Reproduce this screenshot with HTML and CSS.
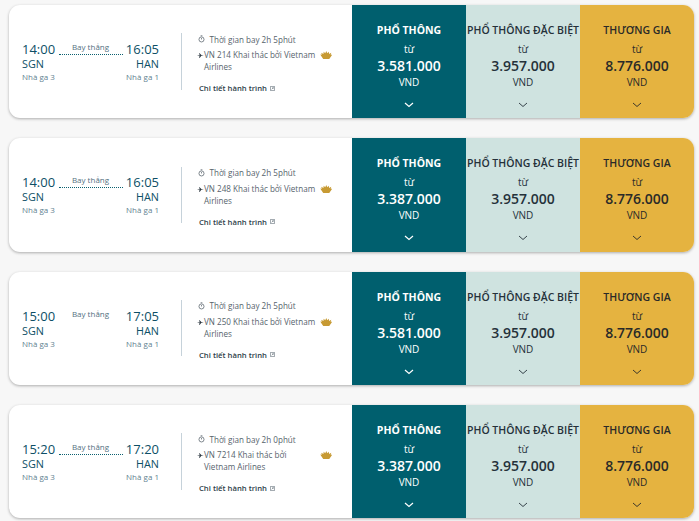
FILE: index.html
```html
<!DOCTYPE html>
<html lang="vi">
<head>
<meta charset="utf-8">
<title>Chuyến bay</title>
<link rel="stylesheet" href="styles.css">
</head>
<body>
<main class="list">
  <article class="card">
    <section class="route">
      <div class="ends">
        <span class="time">14:00</span>
        <div class="stop"><span>Bay thẳng</span></div>
        <span class="time">16:05</span>
      </div>
      <div class="codes"><span>SGN</span><span>HAN</span></div>
      <div class="terminals"><span>Nhà ga 3</span><span>Nhà ga 1</span></div>
    </section>
    <section class="info">
      <div class="duration"><svg class="clock" viewBox="0 0 8 9"><circle cx="4" cy="5" r="2.9"/><path d="M4 3.4V5M3 .8h2"/></svg><span>Thời gian bay 2h 5phút</span></div>
      <div class="carrier"><svg class="plane" viewBox="0 0 8 6"><path d="M0 2.4 1.2 3 3 3 2.2 5.600H3.200L5 3.200 8 2.800 5 2.400 3 .4H2.200L3 2.400 1.200 2.300z"/></svg><span class="carrier-name">VN 214 Khai thác bởi Vietnam Airlines</span><svg class="lotus" viewBox="0 0 12 8"><path d="M6 0 7 2.200 8.600 .8 8.800 3 11 1.800 10.400 3.800 12 3.600 10.400 6 9 8H3L1.600 6 0 3.600 1.600 3.800 1 1.800 3.200 3 3.400 .8 5 2.200z"/></svg></div>
      <div class="details"><span>Chi tiết hành trình</span><svg class="ext" viewBox="0 0 6 6"><path d="M.5.5h5v5h-5zM2 4l2-2M2.800 2H4v1.200"/></svg></div>
    </section>
    <section class="fare fare-eco"><h3>PHỔ THÔNG</h3><span class="from">từ</span><strong>3.581.000</strong><span class="cur">VND</span><svg class="chev" viewBox="0 0 10 6"><path d="M1 1l4 3.500L9 1"/></svg></section>
    <section class="fare fare-plus"><h3>PHỔ THÔNG ĐẶC BIỆT</h3><span class="from">từ</span><strong>3.957.000</strong><span class="cur">VND</span><svg class="chev" viewBox="0 0 10 6"><path d="M1 1l4 3.500L9 1"/></svg></section>
    <section class="fare fare-biz"><h3>THƯƠNG GIA</h3><span class="from">từ</span><strong>8.776.000</strong><span class="cur">VND</span><svg class="chev" viewBox="0 0 10 6"><path d="M1 1l4 3.500L9 1"/></svg></section>
  </article>
  <article class="card">
    <section class="route">
      <div class="ends">
        <span class="time">14:00</span>
        <div class="stop"><span>Bay thẳng</span></div>
        <span class="time">16:05</span>
      </div>
      <div class="codes"><span>SGN</span><span>HAN</span></div>
      <div class="terminals"><span>Nhà ga 3</span><span>Nhà ga 1</span></div>
    </section>
    <section class="info">
      <div class="duration"><svg class="clock" viewBox="0 0 8 9"><circle cx="4" cy="5" r="2.9"/><path d="M4 3.4V5M3 .8h2"/></svg><span>Thời gian bay 2h 5phút</span></div>
      <div class="carrier"><svg class="plane" viewBox="0 0 8 6"><path d="M0 2.4 1.2 3 3 3 2.2 5.600H3.200L5 3.200 8 2.800 5 2.400 3 .4H2.200L3 2.400 1.200 2.300z"/></svg><span class="carrier-name">VN 248 Khai thác bởi Vietnam Airlines</span><svg class="lotus" viewBox="0 0 12 8"><path d="M6 0 7 2.200 8.600 .8 8.800 3 11 1.800 10.400 3.800 12 3.600 10.400 6 9 8H3L1.600 6 0 3.600 1.600 3.800 1 1.800 3.200 3 3.400 .8 5 2.200z"/></svg></div>
      <div class="details"><span>Chi tiết hành trình</span><svg class="ext" viewBox="0 0 6 6"><path d="M.5.5h5v5h-5zM2 4l2-2M2.800 2H4v1.200"/></svg></div>
    </section>
    <section class="fare fare-eco"><h3>PHỔ THÔNG</h3><span class="from">từ</span><strong>3.387.000</strong><span class="cur">VND</span><svg class="chev" viewBox="0 0 10 6"><path d="M1 1l4 3.500L9 1"/></svg></section>
    <section class="fare fare-plus"><h3>PHỔ THÔNG ĐẶC BIỆT</h3><span class="from">từ</span><strong>3.957.000</strong><span class="cur">VND</span><svg class="chev" viewBox="0 0 10 6"><path d="M1 1l4 3.500L9 1"/></svg></section>
    <section class="fare fare-biz"><h3>THƯƠNG GIA</h3><span class="from">từ</span><strong>8.776.000</strong><span class="cur">VND</span><svg class="chev" viewBox="0 0 10 6"><path d="M1 1l4 3.500L9 1"/></svg></section>
  </article>
  <article class="card">
    <section class="route">
      <div class="ends">
        <span class="time">15:00</span>
        <div class="stop stop-plain"><span>Bay thẳng</span></div>
        <span class="time">17:05</span>
      </div>
      <div class="codes"><span>SGN</span><span>HAN</span></div>
      <div class="terminals"><span>Nhà ga 3</span><span>Nhà ga 1</span></div>
    </section>
    <section class="info">
      <div class="duration"><svg class="clock" viewBox="0 0 8 9"><circle cx="4" cy="5" r="2.9"/><path d="M4 3.4V5M3 .8h2"/></svg><span>Thời gian bay 2h 5phút</span></div>
      <div class="carrier"><svg class="plane" viewBox="0 0 8 6"><path d="M0 2.4 1.2 3 3 3 2.2 5.600H3.200L5 3.200 8 2.800 5 2.400 3 .4H2.200L3 2.400 1.200 2.300z"/></svg><span class="carrier-name">VN 250 Khai thác bởi Vietnam Airlines</span><svg class="lotus" viewBox="0 0 12 8"><path d="M6 0 7 2.200 8.600 .8 8.800 3 11 1.800 10.400 3.800 12 3.600 10.400 6 9 8H3L1.600 6 0 3.600 1.600 3.800 1 1.800 3.200 3 3.400 .8 5 2.200z"/></svg></div>
      <div class="details"><span>Chi tiết hành trình</span><svg class="ext" viewBox="0 0 6 6"><path d="M.5.5h5v5h-5zM2 4l2-2M2.800 2H4v1.200"/></svg></div>
    </section>
    <section class="fare fare-eco"><h3>PHỔ THÔNG</h3><span class="from">từ</span><strong>3.581.000</strong><span class="cur">VND</span><svg class="chev" viewBox="0 0 10 6"><path d="M1 1l4 3.500L9 1"/></svg></section>
    <section class="fare fare-plus"><h3>PHỔ THÔNG ĐẶC BIỆT</h3><span class="from">từ</span><strong>3.957.000</strong><span class="cur">VND</span><svg class="chev" viewBox="0 0 10 6"><path d="M1 1l4 3.500L9 1"/></svg></section>
    <section class="fare fare-biz"><h3>THƯƠNG GIA</h3><span class="from">từ</span><strong>8.776.000</strong><span class="cur">VND</span><svg class="chev" viewBox="0 0 10 6"><path d="M1 1l4 3.500L9 1"/></svg></section>
  </article>
  <article class="card">
    <section class="route">
      <div class="ends">
        <span class="time">15:20</span>
        <div class="stop"><span>Bay thẳng</span></div>
        <span class="time">17:20</span>
      </div>
      <div class="codes"><span>SGN</span><span>HAN</span></div>
      <div class="terminals"><span>Nhà ga 3</span><span>Nhà ga 1</span></div>
    </section>
    <section class="info">
      <div class="duration"><svg class="clock" viewBox="0 0 8 9"><circle cx="4" cy="5" r="2.9"/><path d="M4 3.4V5M3 .8h2"/></svg><span>Thời gian bay 2h 0phút</span></div>
      <div class="carrier"><svg class="plane" viewBox="0 0 8 6"><path d="M0 2.4 1.2 3 3 3 2.2 5.600H3.200L5 3.200 8 2.800 5 2.400 3 .4H2.200L3 2.400 1.200 2.300z"/></svg><span class="carrier-name">VN 7214 Khai thác bởi Vietnam Airlines</span><svg class="lotus" viewBox="0 0 12 8"><path d="M6 0 7 2.200 8.600 .8 8.800 3 11 1.800 10.400 3.800 12 3.600 10.400 6 9 8H3L1.600 6 0 3.600 1.600 3.800 1 1.800 3.200 3 3.400 .8 5 2.200z"/></svg></div>
      <div class="details"><span>Chi tiết hành trình</span><svg class="ext" viewBox="0 0 6 6"><path d="M.5.5h5v5h-5zM2 4l2-2M2.800 2H4v1.200"/></svg></div>
    </section>
    <section class="fare fare-eco"><h3>PHỔ THÔNG</h3><span class="from">từ</span><strong>3.387.000</strong><span class="cur">VND</span><svg class="chev" viewBox="0 0 10 6"><path d="M1 1l4 3.500L9 1"/></svg></section>
    <section class="fare fare-plus"><h3>PHỔ THÔNG ĐẶC BIỆT</h3><span class="from">từ</span><strong>3.957.000</strong><span class="cur">VND</span><svg class="chev" viewBox="0 0 10 6"><path d="M1 1l4 3.500L9 1"/></svg></section>
    <section class="fare fare-biz"><h3>THƯƠNG GIA</h3><span class="from">từ</span><strong>8.776.000</strong><span class="cur">VND</span><svg class="chev" viewBox="0 0 10 6"><path d="M1 1l4 3.500L9 1"/></svg></section>
  </article>
</main>
</body>
</html>
```
FILE: styles.css
```css
* { box-sizing: border-box; }
html, body { margin: 0; height: 100%; overflow: hidden; }
body { background: #f7f7f7; font-family: "Open Sans", "Liberation Sans", sans-serif; color: #1f2a33; }

.list { display: flex; flex-direction: column; gap: 20px; padding: 5px 5px 0 9px; }
.card { display: grid; grid-template-columns: 171.5px 171.5px 114px 114px 114px; height: 113.3px; background: #fff; border-radius: 11px; overflow: hidden; box-shadow: 0 1px 3px rgba(0,0,0,.3); }

.route { align-self: center; padding: 2px 21.5px 0 13px; color: #0d4f66; }
.ends { display: flex; justify-content: space-between; align-items: flex-start; }
.time { font-size: 13px; line-height: 15px; }
.stop { width: 64px; height: 14px; margin-top: -1px; border-bottom: 1px dotted #0b6070; text-align: center; font-size: 8px; line-height: 12px; color: #54707f; white-space: nowrap; }
.stop-plain { border-bottom-color: transparent; }
.codes { display: flex; justify-content: space-between; font-size: 10.8px; line-height: 14px; }
.terminals { display: flex; justify-content: space-between; font-size: 8px; line-height: 12px; color: #5f7f90; }

.info { align-self: center; height: 56.5px; border-left: 1px solid #c6d2da; padding: 0 0 0 16px; color: #56636c; font-size: 8.1px; }
.duration { display: flex; align-items: center; height: 12px; }
.clock { width: 7px; height: 8px; margin-right: 5px; fill: none; stroke: #4a5660; stroke-width: .8; }
.carrier { display: flex; align-items: flex-start; margin-top: 4px; }
.plane { width: 7px; height: 5px; margin: 4px 0 0 -0.5px; fill: #2f3a42; flex: none; }
.carrier-name { width: 112px; line-height: 12px; }
.lotus { width: 12.5px; height: 8px; margin: 2px 0 0 3.5px; fill: #c79a33; flex: none; }
.details { display: flex; align-items: center; margin: 9px 0 0 1.5px; height: 12px; color: #2e3e49; font-size: 7.7px; font-weight: 600; }
.ext { width: 5px; height: 5px; margin-left: 3px; fill: none; stroke: #55636d; stroke-width: .7; }

.fare { display: flex; flex-direction: column; align-items: center; padding-top: 17px; white-space: nowrap; }
.fare h3 { margin: 0; font-size: 10.5px; line-height: 16px; font-weight: 600; }
.from { margin-top: 4px; font-size: 10px; line-height: 14px; }
.fare strong { font-size: 14px; line-height: 20px; font-weight: 600; }
.cur { font-size: 10px; line-height: 12px; }
.chev { width: 10px; height: 6px; margin-top: 14px; fill: none; stroke: currentColor; stroke-width: .9; }

.fare-eco { background: #005f6e; color: #fff; }
.fare-eco h3 { font-weight: 700; }
.fare-eco .chev { stroke-width: 1.2; }
.fare-plus { background: #cfe3e0; color: #25313a; }
.fare-biz { background: #e5b340; color: #2a2a28; }
```
